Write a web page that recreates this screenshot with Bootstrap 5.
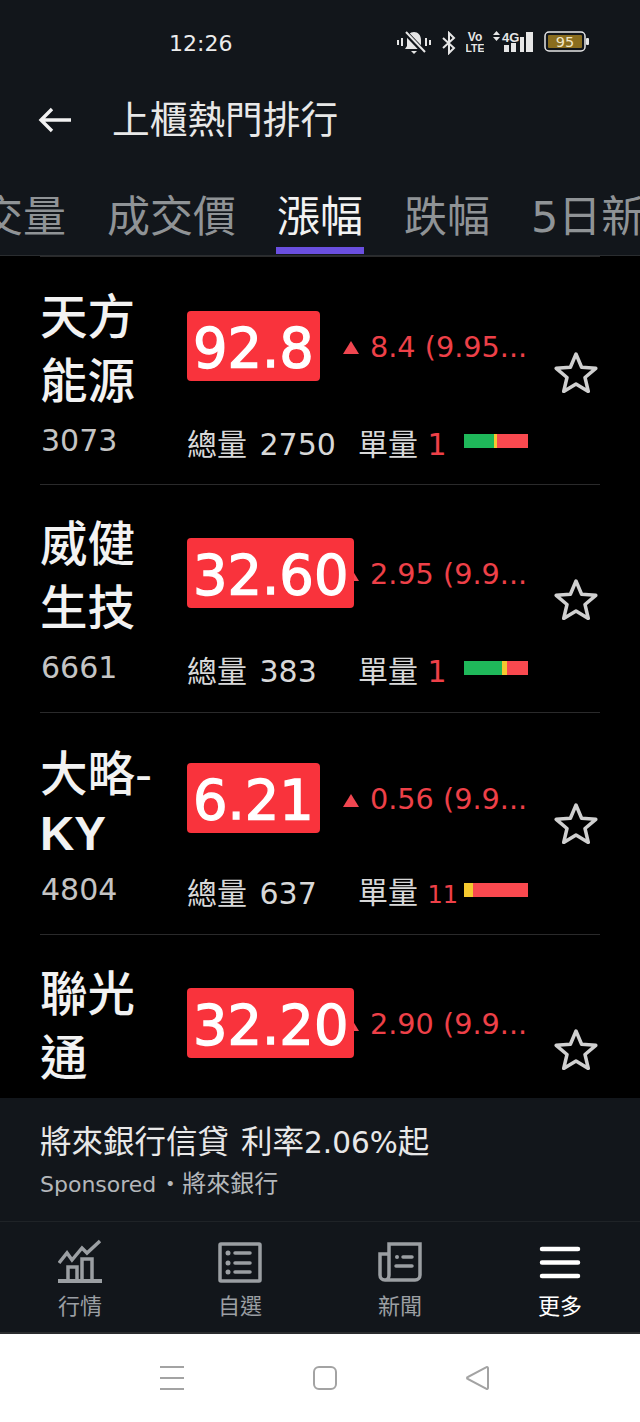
<!DOCTYPE html>
<html lang="zh-Hant">
<head>
    <meta charset="UTF-8">
    <meta name="viewport" content="width=device-width, initial-scale=1.0">
    <title>上櫃熱門排行</title>
    <link href="https://cdn.jsdelivr.net/npm/bootstrap@5.3.3/dist/css/bootstrap.min.css" rel="stylesheet">
    <style>
        html, body { height: 100%; }
        body { width: 640px; height: 1422px; overflow: hidden; background: #000; font-family: "DejaVu Sans", "Noto Sans CJK TC", sans-serif; color: #e6e6e6; }
        .app-shell { height: 1422px; }
        .status-bar { height: 85px; background: #12161b; padding: 25px 50px 0 169px; font-size: 22px; line-height: 38px; color: #ececec; }
        .status-icons { gap: 9px; padding-top: 6px; }
        .top-bar { height: 70px; background: #12161b; padding-left: 38px; }
        .top-title { margin-left: 40px; font-size: 37.7px; line-height: 70px; color: #e8e8e8; }
        .tab-strip { height: 101px; background: #12161b; padding-top: 30px; overflow: hidden; border-bottom: 1px solid #2a2d30; }
        .tab-item { flex: none; margin-right: 41px; font-size: 43px; line-height: 64px; color: #8f9396; white-space: nowrap; }
        .tab-item:first-child { margin-left: -63px; }
        .tab-item.is-on { position: relative; color: #f2f2f2; }
        .tab-item.is-on::after { content: ""; position: absolute; left: -1px; right: -1px; top: 62px; height: 7px; background: #6a4fe0; }
        .stock-list { height: 842px; overflow: hidden; background: #000; }
        .stock-row { display: grid; grid-template-columns: 147px 341px 72px; grid-template-rows: 134px 44px; margin: 0 40px; border-top: 1px solid #2a2a2b; padding-top: 27px; height: 228px; }
        .stock-row:first-child { padding-top: 28px; }
        .stock-row.row-short { height: 222px; grid-template-rows: 128px 44px; }
        .stock-name { font-size: 47.5px; line-height: 64px; font-weight: 500; color: #f2f2f2; margin-top: 1px; }
        .row-short .stock-name { line-height: 59px; margin-top: 5px; }
        .stock-name b { font-family: "Liberation Sans", sans-serif; font-weight: 700; }
        .stock-code { font-size: 30px; line-height: 44px; color: #c4c4c4; padding-left: 1px; }
        .quote-line { height: 128px; padding-bottom: 7px; }
        .row-short .quote-line { height: 123px; }
        .price-cell { flex: none; width: 156px; }
        .price-box { display: inline-block; position: relative; z-index: 1; background: #f9333c; color: #fff; font-size: 54.3px; line-height: 75px; height: 70px; padding: 0 6px; border-radius: 4px; white-space: nowrap; -webkit-text-stroke: 1.300px #fff; }
        .up-mark { flex: none; width: 0; height: 0; border-left: 8px solid transparent; border-right: 8px solid transparent; border-bottom: 13px solid #f04650; margin: 4px 11px 0 0; }
        .change-text { font-size: 28.7px; color: #ee4048; white-space: nowrap; margin-top: 4px; }
        .volume-line { font-size: 30px; line-height: 44px; color: #d8d8d8; }
        .vol-total { width: 171px; flex: none; word-spacing: 3px; margin-top: 8px; }
        .vol-single { width: 105px; flex: none; white-space: nowrap; margin-top: 8px; }
        .vol-num { color: #ee4048; }
        .vol-num-small { font-size: 24px; }
        .flow-bar { width: 64px; height: 14px; flex: none; margin-left: 1px; }
        .flow-bar span { display: block; height: 100%; }
        .flow-green { background: #1fb85a; }
        .flow-yellow { background: #f5c92f; }
        .flow-red { background: #f9494f; }
        .star-cell { grid-column: 3; grid-row: 1 / span 2; justify-self: end; align-self: center; margin: 0 2px 4px 0; }
        .row-short .star-cell { margin-bottom: 6px; }
        .ad-box { height: 124px; background: #12161b; padding: 20px 40px 0; border-bottom: 1px solid #1f2327; }
        .ad-title { font-size: 31.5px; line-height: 48px; color: #e8e8e8; word-spacing: 2px; }
        .ad-num { font-size: 29.5px; }
        .ad-sub { font-size: 24px; line-height: 35px; color: #b4b7ba; }
        .ad-latin { font-size: 22px; margin-right: 2px; }
        .bottom-tabs { height: 112px; background: #12161b; border-bottom: 2px solid #2a2c2e; }
        .bottom-tab { width: 160px; padding-top: 16px; font-size: 22px; line-height: 32px; color: #9b9fa3; }
        .bottom-tab svg { display: block; margin: 0 auto 7px; }
        .bottom-tab.is-on { color: #fff; }
        .sys-nav { height: 88px; background: #fff; }
        .sys-btn { width: 24px; height: 24px; }
        .btn-first { margin-left: 160px; }
        .btn-next { margin-left: 129px; }
    </style>
</head>
<body>
<div class="app-shell d-flex flex-column">
    <div class="status-bar d-flex justify-content-between">
        <span>12:26</span>
        <div class="status-icons d-flex align-items-start">
            <svg width="36" height="24" viewBox="0 0 36 24"><path d="M18 1c-4 0-7 3-7 8v6l-2 3h18l-2-3V9c0-5-3-8-7-8z" fill="#e6e6e6"/><path d="M15 20h6l-3 3z" fill="#e6e6e6"/><path d="M9 1l20 21" stroke="#12161b" stroke-width="5"/><path d="M10 1l19 20" stroke="#e6e6e6" stroke-width="2"/><path d="M2 9v5M6 7v8M30 7v8M34 9v5" stroke="#e6e6e6" stroke-width="2"/></svg>
            <svg width="16" height="24" viewBox="0 0 16 24"><path d="M2 7l11 10-5 5V2l5 5L2 17" fill="none" stroke="#e6e6e6" stroke-width="2"/></svg>
            <svg width="18" height="24" viewBox="0 0 18 24"><text x="9" y="10" text-anchor="middle" font-family="Liberation Sans" font-weight="700" font-size="12" fill="#e6e6e6">Vo</text><text x="9" y="21" text-anchor="middle" font-family="Liberation Sans" font-weight="700" font-size="10.500" fill="#e6e6e6">LTE</text></svg>
            <svg width="42" height="24" viewBox="0 0 42 24"><path d="M0 4l3.500-4L7 4zM0 6l3.500 4L7 6z" fill="#e6e6e6"/><text x="9" y="11" font-family="Liberation Sans" font-weight="700" font-size="13" fill="#e6e6e6">4G</text><path d="M11 14h5v7h-5zM18 12h5v9h-5zM27 6h4v15h-4zM33 1h7v20h-7z" fill="#e6e6e6"/></svg>
            <svg width="46" height="24" viewBox="0 0 46 24"><rect x="1" y="1" width="40" height="19" rx="4" fill="none" stroke="#e6e6e6" stroke-width="1.500"/><rect x="4" y="4" width="34" height="13" rx="1" fill="#8a6d1e"/><rect x="42" y="7" width="3" height="7" rx="1" fill="#e6e6e6"/><text x="21" y="16" text-anchor="middle" font-family="DejaVu Sans" font-size="14.500" fill="#f0e6c8">95</text></svg>
        </div>
    </div>

    <div class="top-bar d-flex align-items-center">
        <svg width="34" height="28" viewBox="0 0 34 28"><path d="M33 14H3M14 3L3 14l11 11" fill="none" stroke="#f2f2f2" stroke-width="3.400"/></svg>
        <span class="top-title">上櫃熱門排行</span>
    </div>

    <div class="tab-strip d-flex">
        <span class="tab-item">成交量</span>
        <span class="tab-item">成交價</span>
        <span class="tab-item is-on">漲幅</span>
        <span class="tab-item">跌幅</span>
        <span class="tab-item">5日新高</span>
    </div>

    <div class="stock-list">
        <div class="stock-row">
            <div class="stock-name">天方<br>能源</div>
            <div class="quote-line d-flex align-items-center">
                <div class="price-cell"><span class="price-box">92.8</span></div>
                <span class="up-mark"></span><span class="change-text">8.4 (9.95...</span>
            </div>
            <svg class="star-cell" width="44" height="42" viewBox="0 0 44 42"><path d="M22 3l5.600 13.200 14.200 1.100-10.800 9.200 3.300 13.900L22 32.900 9.700 40.400 13 26.500 2.200 17.300l14.200-1.100z" fill="none" stroke="#d0d0d0" stroke-width="3.500" stroke-linejoin="round"/></svg>
            <div class="stock-code">3073</div>
            <div class="volume-line d-flex align-items-center">
                <span class="vol-total">總量 2750</span>
                <span class="vol-single">單量 <span class="vol-num">1</span></span>
                <div class="flow-bar d-flex"><span class="flow-green" style="width:30px"></span><span class="flow-yellow" style="width:3px"></span><span class="flow-red" style="width:31px"></span></div>
            </div>
        </div>
        <div class="stock-row">
            <div class="stock-name">威健<br>生技</div>
            <div class="quote-line d-flex align-items-center">
                <div class="price-cell"><span class="price-box">32.60</span></div>
                <span class="up-mark"></span><span class="change-text">2.95 (9.9...</span>
            </div>
            <svg class="star-cell" width="44" height="42" viewBox="0 0 44 42"><path d="M22 3l5.600 13.200 14.200 1.100-10.800 9.200 3.300 13.900L22 32.900 9.700 40.400 13 26.500 2.200 17.300l14.200-1.100z" fill="none" stroke="#d0d0d0" stroke-width="3.500" stroke-linejoin="round"/></svg>
            <div class="stock-code">6661</div>
            <div class="volume-line d-flex align-items-center">
                <span class="vol-total">總量 383</span>
                <span class="vol-single">單量 <span class="vol-num">1</span></span>
                <div class="flow-bar d-flex"><span class="flow-green" style="width:38px"></span><span class="flow-yellow" style="width:5px"></span><span class="flow-red" style="width:21px"></span></div>
            </div>
        </div>
        <div class="stock-row row-short">
            <div class="stock-name">大略-<br><b>KY</b></div>
            <div class="quote-line d-flex align-items-center">
                <div class="price-cell"><span class="price-box">6.21</span></div>
                <span class="up-mark"></span><span class="change-text">0.56 (9.9...</span>
            </div>
            <svg class="star-cell" width="44" height="42" viewBox="0 0 44 42"><path d="M22 3l5.600 13.200 14.200 1.100-10.800 9.200 3.300 13.900L22 32.900 9.700 40.400 13 26.500 2.200 17.300l14.200-1.100z" fill="none" stroke="#d0d0d0" stroke-width="3.500" stroke-linejoin="round"/></svg>
            <div class="stock-code">4804</div>
            <div class="volume-line d-flex align-items-center">
                <span class="vol-total">總量 637</span>
                <span class="vol-single">單量 <span class="vol-num vol-num-small">11</span></span>
                <div class="flow-bar d-flex"><span class="flow-yellow" style="width:9px"></span><span class="flow-red" style="width:55px"></span></div>
            </div>
        </div>
        <div class="stock-row">
            <div class="stock-name">聯光<br>通</div>
            <div class="quote-line d-flex align-items-center">
                <div class="price-cell"><span class="price-box">32.20</span></div>
                <span class="up-mark"></span><span class="change-text">2.90 (9.9...</span>
            </div>
            <svg class="star-cell" width="44" height="42" viewBox="0 0 44 42"><path d="M22 3l5.600 13.200 14.200 1.100-10.800 9.200 3.300 13.900L22 32.900 9.700 40.400 13 26.500 2.200 17.300l14.200-1.100z" fill="none" stroke="#d0d0d0" stroke-width="3.500" stroke-linejoin="round"/></svg>
        </div>
    </div>

    <div class="ad-box">
        <div class="ad-title">將來銀行信貸 利率<span class="ad-num">2.06%</span>起</div>
        <div class="ad-sub"><span class="ad-latin">Sponsored</span>・將來銀行</div>
    </div>

    <div class="bottom-tabs d-flex">
        <div class="bottom-tab text-center">
            <svg width="44" height="46" viewBox="0 -2 44 46"><path d="M1 23l8-10 5 7 10-12 5 5L42 1" fill="none" stroke="#9b9fa3" stroke-width="3.500"/><path d="M0 41h44" stroke="#9b9fa3" stroke-width="4"/><path d="M10 39V27h9v12M24 39V19h10v20" fill="none" stroke="#9b9fa3" stroke-width="3.500"/></svg>
            行情
        </div>
        <div class="bottom-tab text-center">
            <svg width="44" height="46" viewBox="0 0 44 46"><rect x="2" y="6" width="40" height="37" fill="none" stroke="#9b9fa3" stroke-width="3.500" rx="1"/><path d="M17 15h15M17 25h15M17 34h15" stroke="#9b9fa3" stroke-width="3.500" stroke-linecap="round"/><circle cx="10" cy="15" r="2.500" fill="#9b9fa3"/><circle cx="10" cy="25" r="2.500" fill="#9b9fa3"/><circle cx="10" cy="34" r="2.500" fill="#9b9fa3"/></svg>
            自選
        </div>
        <div class="bottom-tab text-center">
            <svg width="44" height="46" viewBox="0 -2 44 46"><path d="M11 4h31v31c0 3-2 5-5 5H7c-3 0-5-2-5-5V14h9zM11 14v21c0 2-1 5-4 5" fill="none" stroke="#9b9fa3" stroke-width="3.500"/><circle cx="19" cy="17" r="2" fill="#9b9fa3"/><path d="M25 17h9M18 26h16" stroke="#9b9fa3" stroke-width="3.500" stroke-linecap="round"/></svg>
            新聞
        </div>
        <div class="bottom-tab is-on text-center">
            <svg width="44" height="46" viewBox="0 0 44 46"><path d="M4 11h36M4 24.500h36M4 38h36" stroke="#fff" stroke-width="4.500" stroke-linecap="round"/></svg>
            更多
        </div>
    </div>

    <div class="sys-nav d-flex align-items-center">
        <svg class="sys-btn btn-first" viewBox="0 0 24 24"><path d="M0 1h24M0 12h24M0 23h24" stroke="#a3a3a3" stroke-width="2"/></svg>
        <svg class="sys-btn btn-next" viewBox="0 0 24 24"><rect x="1" y="1" width="22" height="22" rx="5" fill="none" stroke="#a3a3a3" stroke-width="2"/></svg>
        <svg class="sys-btn btn-next" viewBox="0 0 24 24"><path d="M22 2v20a1 1 0 0 1-1.500 .8L2 13a1 1 0 0 1 0-2L20.500 1.200A1 1 0 0 1 22 2z" fill="none" stroke="#a3a3a3" stroke-width="2"/></svg>
    </div>
</div>
<script src="https://cdn.jsdelivr.net/npm/bootstrap@5.3.3/dist/js/bootstrap.bundle.min.js"></script>
</body>
</html>
